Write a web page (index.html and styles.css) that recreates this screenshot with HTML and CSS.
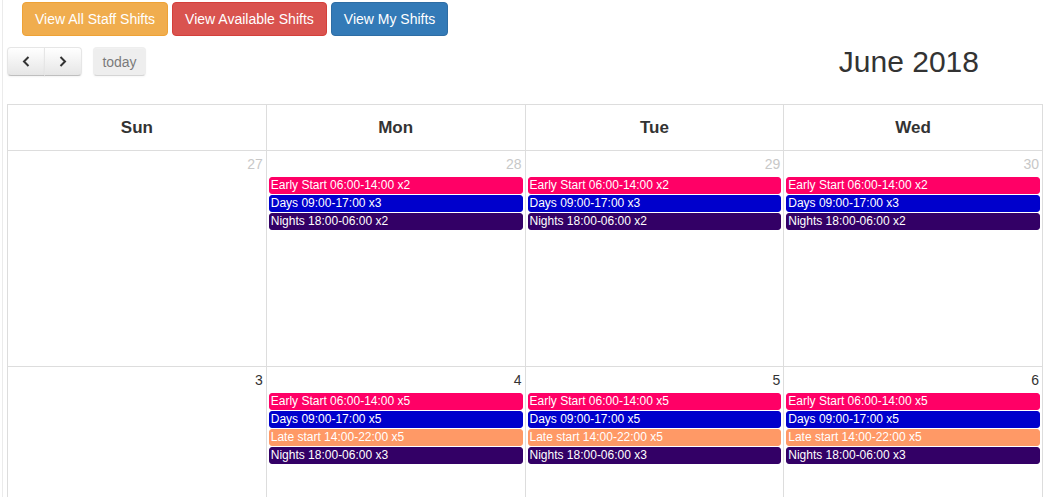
FILE: index.html
```html
<!DOCTYPE html>
<html>
<head>
<meta charset="utf-8">
<link rel="stylesheet" href="styles.css">
</head>
<body>
<div class="page">
  <div class="filters">
    <button class="btn btn-warning">View All Staff Shifts</button>
    <button class="btn btn-danger">View Available Shifts</button>
    <button class="btn btn-primary">View My Shifts</button>
  </div>
  <div class="toolbar">
    <div class="btn-group">
      <button class="fc-btn fc-prev" aria-label="prev"><svg width="8" height="11" viewBox="0 0 8 11"><path d="M6.5 1 L2 5.5 L6.5 10" fill="none" stroke="#333" stroke-width="2"/></svg></button>
      <button class="fc-btn fc-next" aria-label="next"><svg width="8" height="11" viewBox="0 0 8 11"><path d="M1.5 1 L6 5.5 L1.5 10" fill="none" stroke="#333" stroke-width="2"/></svg></button>
    </div>
    <button class="fc-btn fc-today" disabled>today</button>
    <h2 class="title">June 2018</h2>
  </div>
  <div class="cal">
    <div class="head">Sun</div>
    <div class="head">Mon</div>
    <div class="head">Tue</div>
    <div class="head">Wed</div>

    <div class="day"><div class="num other">27</div></div>
    <div class="day"><div class="num other">28</div>
      <div class="ev early">Early Start 06:00-14:00 x2</div>
      <div class="ev days">Days 09:00-17:00 x3</div>
      <div class="ev nights">Nights 18:00-06:00 x2</div>
    </div>
    <div class="day"><div class="num other">29</div>
      <div class="ev early">Early Start 06:00-14:00 x2</div>
      <div class="ev days">Days 09:00-17:00 x3</div>
      <div class="ev nights">Nights 18:00-06:00 x2</div>
    </div>
    <div class="day"><div class="num other">30</div>
      <div class="ev early">Early Start 06:00-14:00 x2</div>
      <div class="ev days">Days 09:00-17:00 x3</div>
      <div class="ev nights">Nights 18:00-06:00 x2</div>
    </div>

    <div class="day"><div class="num">3</div></div>
    <div class="day"><div class="num">4</div>
      <div class="ev early">Early Start 06:00-14:00 x5</div>
      <div class="ev days">Days 09:00-17:00 x5</div>
      <div class="ev late">Late start 14:00-22:00 x5</div>
      <div class="ev nights">Nights 18:00-06:00 x3</div>
    </div>
    <div class="day"><div class="num">5</div>
      <div class="ev early">Early Start 06:00-14:00 x5</div>
      <div class="ev days">Days 09:00-17:00 x5</div>
      <div class="ev late">Late start 14:00-22:00 x5</div>
      <div class="ev nights">Nights 18:00-06:00 x3</div>
    </div>
    <div class="day"><div class="num">6</div>
      <div class="ev early">Early Start 06:00-14:00 x5</div>
      <div class="ev days">Days 09:00-17:00 x5</div>
      <div class="ev late">Late start 14:00-22:00 x5</div>
      <div class="ev nights">Nights 18:00-06:00 x3</div>
    </div>
  </div>
</div>
</body>
</html>
```
FILE: styles.css
```css
html, body {
  margin: 0;
  padding: 0;
  overflow: hidden;
  background: #fff;
}
body {
  font-family: "Liberation Sans", Arial, sans-serif;
  font-size: 14px;
  color: #333;
}
.page {
  margin-left: 2px;
  border-left: 1px solid #ebebeb;
  padding: 2px 0 0 4px;
  height: 495px;
  overflow: hidden;
}
.filters {
  display: flex;
  gap: 4px;
  padding-left: 15px;
}
.btn {
  font-family: inherit;
  font-size: 14px;
  line-height: 20px;
  padding: 6px 12px;
  border: 1px solid transparent;
  border-radius: 4px;
  color: #fff;
  cursor: pointer;
}
.btn-warning { background: #f0ad4e; border-color: #eea236; }
.btn-danger { background: #d9534f; border-color: #d43f3a; }
.btn-primary { background: #337ab7; border-color: #2e6da4; }

.toolbar {
  display: flex;
  align-items: center;
  margin-top: 11px;
  height: 29px;
}
.btn-group {
  display: flex;
}
.fc-btn {
  height: 29px;
  box-sizing: border-box;
  font-family: inherit;
  font-size: 14px;
  color: #333;
  background: linear-gradient(#ffffff, #e6e6e6);
  border: 1px solid;
  border-color: #e6e6e6 #e6e6e6 #bfbfbf;
  box-shadow: inset 0 1px 0 rgba(255,255,255,.2), 0 1px 2px rgba(0,0,0,.05);
  padding: 0 8px;
  display: flex;
  align-items: center;
  justify-content: center;
}
.fc-prev, .fc-next {
  width: 38px;
}
.fc-prev { border-radius: 4px 0 0 4px; }
.fc-next { border-radius: 0 4px 4px 0; margin-left: -1px; }
.fc-today {
  margin-left: 11px;
  border-radius: 4px;
  width: 53px;
  opacity: .65;
  background: #e6e6e6;
}
.title {
  margin: 0 64px 0 auto;
  font-size: 30px;
  font-weight: normal;
  line-height: 29px;
  color: #333;
}
.cal {
  margin-top: 28px;
  width: 1035px;
  display: grid;
  grid-template-columns: repeat(4, 1fr);
  grid-template-rows: 46px 216px 216px;
  border-top: 1px solid #ddd;
  border-left: 1px solid #ddd;
}
.head, .day {
  border-right: 1px solid #ddd;
  border-bottom: 1px solid #ddd;
  box-sizing: border-box;
}
.head {
  display: flex;
  align-items: center;
  justify-content: center;
  font-weight: bold;
  font-size: 17px;
  color: #333;
}
.num {
  height: 25px;
  box-sizing: border-box;
  padding: 3px 3px 0 0;
  line-height: 20px;
  text-align: right;
  font-size: 14px;
  color: #333;
}
.num.other { color: #c8c8c8; }
.ev {
  margin: 1px 2px 0 2px;
  border: 1px solid;
  border-radius: 3px;
  padding: 0 1px;
  font-size: 12px;
  line-height: 15px;
  color: #fff;
  white-space: nowrap;
  overflow: hidden;
}
.early { background: #ff0066; border-color: #ff0066; }
.days { background: #0000cc; border-color: #0000cc; }
.late { background: #ff9966; border-color: #ff9966; }
.nights { background: #330066; border-color: #330066; }
```
